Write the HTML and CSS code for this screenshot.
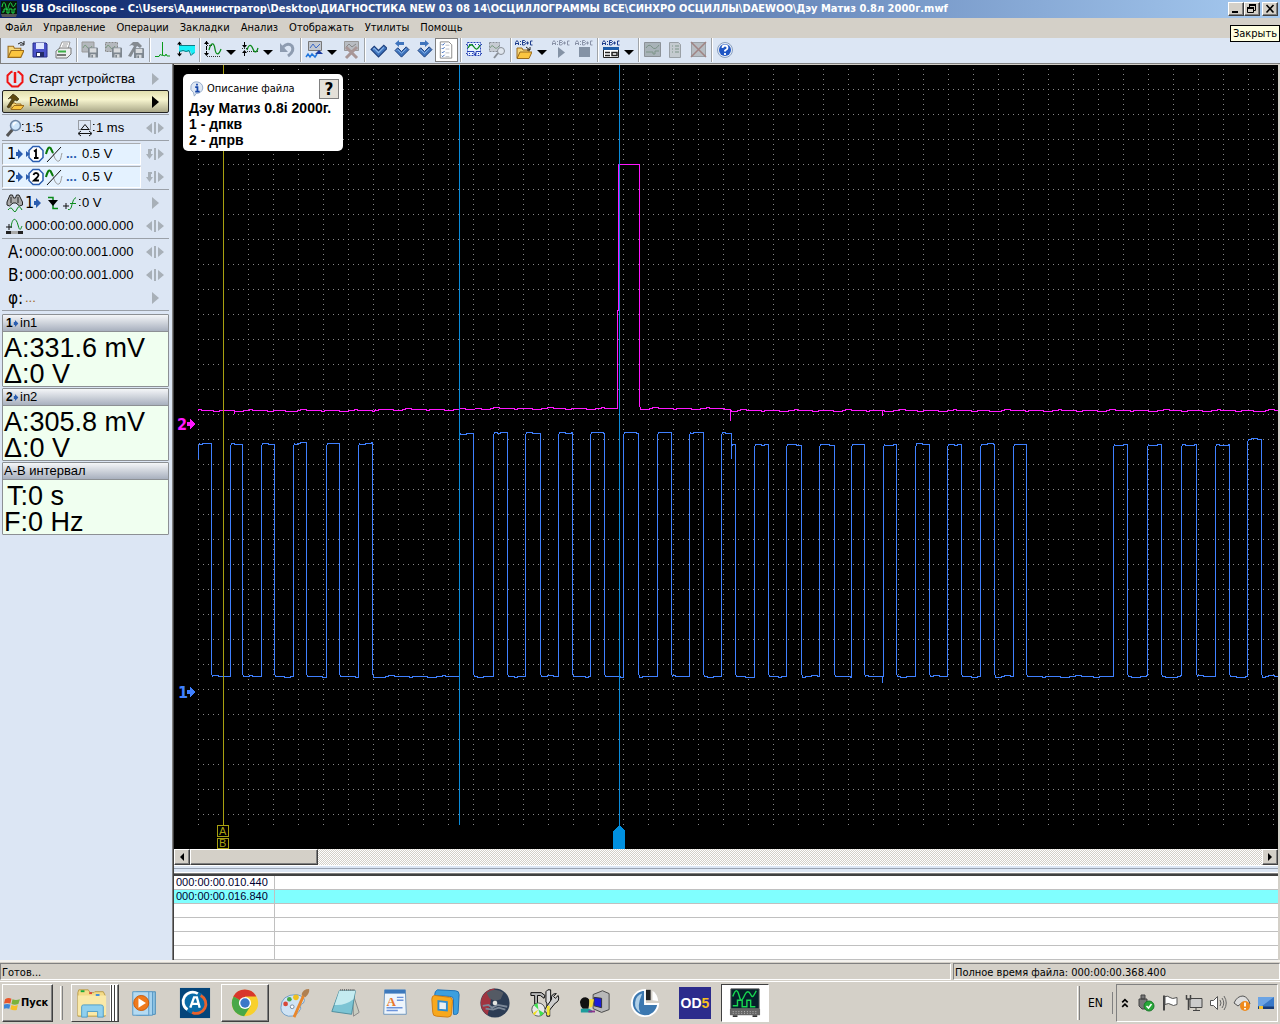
FILE: index.html
```html
<!DOCTYPE html>
<html lang="ru">
<head>
<meta charset="utf-8">
<title>USB Oscilloscope</title>
<link rel="stylesheet" href="styles.css">
</head>
<body>
<svg class="defs" aria-hidden="true">
  <symbol id="drop" viewBox="0 0 14 22"><path d="M2 11h10l-5 5z" fill="#000"/></symbol>
  <symbol id="floppy" viewBox="0 0 12 12"><path d="M0 0h11l1 1v11H0z"/><path d="M2 1h8v5H2zM3 8h6v4H3z" fill="#fff" fill-opacity=".7"/><path d="M4 9h2v3H4z"/></symbol>
  <symbol id="tick" viewBox="0 0 16 16"><path d="M1 7l3-3 4 4 5-5 3 3-8 8z" fill="#3f74bd" stroke="#1d3f7d"/><path d="M3 7l1-1 4 4 5-5" fill="none" stroke="#8db8ea"/></symbol>
  <symbol id="abc" viewBox="0 0 18 6"><path d="M.5 5V2.500L2 .5l1.500 2V5M.5 3.500h3M5.500 1v1M5.500 4v1M7.500 5V.5h2l1 1-1 1h-2 2l1 1-1 1.500h-2M11 3h3M12.500 1.500v3M17.500 1h-2v4h2" fill="none" stroke="currentColor"/></symbol>
  <symbol id="folder" viewBox="0 0 16 12"><path d="M1 11V1h5l1 2h6v2" fill="#f6d77b" stroke="#9a6b1c"/><path d="M1 11.500L4 5h12l-3 6.500z" fill="#fbc540" stroke="#9a6b1c"/></symbol>
  <symbol id="spin" viewBox="0 0 20 12"><path d="M1 6l6-5v10zM13 1l6 5-6 5zM9 0h2v12H9z" fill="#a8b0b8"/></symbol>
  <symbol id="flip" viewBox="0 0 20 12"><path d="M7 2H4v5M5 2v6" fill="none" stroke="#a8b0b8" stroke-width="2"/><path d="M1 6h7l-3.500 5z" fill="#a8b0b8"/><path d="M13 1l6 5-6 5zM9 0h2v12H9z" fill="#a8b0b8"/></symbol>
  <symbol id="next" viewBox="0 0 20 12"><path d="M7 0l7 6-7 6z" fill="currentColor"/></symbol>
  <symbol id="blue-arrow" viewBox="0 0 7 10"><path d="M0 3h2V0l5 5-5 5V7H0z" fill="#2a5db0"/></symbol>
  <symbol id="sine" viewBox="0 0 18 18"><path d="M1 9c2-7 3-7 4.500-6S8 8 9 11s3 6 5 5 2-5 3-8" fill="none" stroke="#999"/><path d="M1 9c2-7 3-7 4.500-6L8 8" fill="none" stroke="#0a7a0a" stroke-width="2"/><path d="M2 17L16 2" stroke="#111"/></symbol>
</svg>

<header class="titlebar">
  <svg class="app-icon" viewBox="0 0 16 16"><path d="M0 0h16v13H0z" fill="#0a1a0c"/><path d="M0 13h16l-1 3H1z" fill="#555"/><path d="M1 6c1-6 3-6 4 0s2 1 3-2 2-3 3 0 2 2 4-2M1 11h2V8h3v4h2V8h3v4h2V8h2" fill="none" stroke="#1fdc4b"/></svg>
  <h1>USB Oscilloscope - C:\Users\Администратор\Desktop\ДИАГНОСТИКА NEW 03 08 14\ОСЦИЛЛОГРАММЫ ВСЕ\СИНХРО ОСЦИЛЛЫ\DAEWOO\Дэу Матиз 0.8л 2000г.mwf</h1>
  <div class="winbuttons">
    <button class="raised" aria-label="Свернуть"><svg viewBox="0 0 12 10"><path d="M2 7h6v2H2z"/></svg></button>
    <button class="raised" aria-label="Восстановить"><svg viewBox="0 0 12 10"><path d="M3.500 0v3M3 1h7M9.500 1v5.500H8" fill="none" stroke="#000"/><path d="M3 0h7v2H3zM1 3h7v2H1z"/><path d="M1.500 4v4.500h6V4" fill="none" stroke="#000"/></svg></button>
    <button class="raised close" aria-label="Закрыть"><svg viewBox="0 0 12 10"><path d="M2.500 1l7 7.500M9.500 1l-7 7.500" stroke="#000" stroke-width="1.600"/></svg></button>
  </div>
  <div class="tooltip" role="tooltip">Закрыть</div>
</header>

<nav class="menu">
  <button>Файл</button><button>Управление</button><button>Операции</button><button>Закладки</button><button>Анализ</button><button>Отображать</button><button>Утилиты</button><button>Помощь</button>
</nav>

<div class="toolbar" role="toolbar">
  <button aria-label="Открыть"><svg viewBox="0 0 22 22"><use href="#folder" x="1" y="6" width="17" height="13"/><path d="M12 5q3-3 6 0M18 2v4h-4" fill="none" stroke="#222"/></svg></button>
  <button aria-label="Сохранить"><svg viewBox="0 0 22 22"><path d="M4 4h13l1 1v13H4z" fill="#4a52c8" stroke="#262c8a"/><path d="M7 4h8v6H7z" fill="#dfe6ff"/><path d="M7 13h8v5H7z" fill="#222a66"/><path d="M8 14h3v3H8z" fill="#fff"/></svg></button>
  <button aria-label="Печать"><svg viewBox="0 0 22 22"><path d="M7 10l3-7h8l-2 7z" fill="#fff" stroke="#999"/><path d="M4 12l4-3h11v6l-4 4H4z" fill="#eceeef" stroke="#777"/><path d="M5 15h9v2H5z" fill="#777"/><path d="M6 12.500h8" stroke="#3cae46" stroke-width="2"/><path d="M11 5h5M10 7h5" stroke="#999"/></svg></button>
  <i class="sep"></i>
  <button disabled aria-label="Сохранить сигнал"><svg viewBox="0 0 22 22"><path d="M3 3h12v10H3z" fill="#b4b8bd" stroke="#999"/><path d="M4 9q2-5 4-1t5-1" fill="none" stroke="#7b9b82"/><use href="#floppy" x="9" y="8" width="10" height="11" fill="#7e8790"/></svg></button>
  <button disabled aria-label="Сохранить фрагмент"><svg viewBox="0 0 22 22"><path d="M3.500 3.500h12v9h-12z" fill="#b4b8bd" stroke="#888" stroke-dasharray="2 1"/><path d="M4 9q2-5 4-1t5-1" fill="none" stroke="#7b9b82"/><use href="#floppy" x="10" y="8" width="10" height="11" fill="#7e8790"/></svg></button>
  <button disabled aria-label="Сохранить настройки"><svg viewBox="0 0 22 22"><path d="M4 7l4-4 5 0 4 4-2 2-3-2-6 11-3-1 6-10-2-1z" fill="#858b91"/><use href="#floppy" x="9" y="9" width="10" height="10" fill="#7e8790"/></svg></button>
  <i class="sep"></i>
  <button aria-label="Спектр"><svg viewBox="0 0 22 22"><path d="M3 17.500h4l1-2 2.500 1V3v13l2.500 1 1-2 1 2h3" fill="none" stroke="#0a9a1a"/></svg></button>
  <button aria-label="Маркеры"><svg viewBox="0 0 22 22"><path d="M4 6h16v3H4zM4 9h16v5l-3 2-2-4-3 1-3-1-5 1z" fill="#19f0f8"/><path d="M4 6.500h16M4 12.500l4-1 3 1 3-1 2 5 3-3" fill="none" stroke="#137a84"/><path d="M4.500 3v3M4.500 13v4" stroke="#000"/><path d="M2 5.500l2.500-3 2.500 3zM2 14.500l2.500 3 2.500-3z"/></svg></button>
  <i class="sep"></i>
  <button aria-label="Масштаб"><svg viewBox="0 0 22 22"><path d="M4.500 2v14" stroke="#000" stroke-dasharray="4 1"/><path d="M2 5l2.500-3L7 5zM2 14l2.500 3L7 14z"/><path d="M5 6.500h6M5 17.500h14" stroke="#333" stroke-dasharray="1 1"/><path d="M7 11c2-8 5-8 6-1s4 6 6 0" fill="none" stroke="#0a8a1a" stroke-width="1.300"/></svg></button>
  <button class="drop" aria-label="Масштаб: список"><svg viewBox="0 0 14 22"><use href="#drop"/></svg></button>
  <button aria-label="Сжатие"><svg viewBox="0 0 22 22"><path d="M5.500 3v5M5.500 12v5" stroke="#000"/><path d="M3 6h5l-2.500 3zM3 14h5l-2.500-3z"/><path d="M3 9.500h6M8 12.500h11" stroke="#333" stroke-dasharray="1 1"/><path d="M8 11c2-6 4-6 6-1s4 3 5-1" fill="none" stroke="#0a8a1a" stroke-width="1.300"/></svg></button>
  <button class="drop" aria-label="Сжатие: список"><svg viewBox="0 0 14 22"><use href="#drop"/></svg></button>
  <button disabled aria-label="Отменить"><svg viewBox="0 0 22 22"><path d="M7 8q5-5 9-1 3 5-4 10" fill="none" stroke="#8e9cb0" stroke-width="3"/><path d="M4 4v9h8z" fill="#8e9cb0"/></svg></button>
  <i class="sep"></i>
  <button aria-label="Наложение"><svg viewBox="0 0 22 22"><path d="M5.500 2.500h13v9h-13z" fill="#c2c8d0" stroke="#777"/><path d="M7 9l3-4 3 4 4-4" fill="none" stroke="#3a68c8"/><path d="M3 18l2-3 2 3 2-3 3 3 2-3" fill="none" stroke="#2277dd" stroke-width="1.500"/><path d="M12 15l4-4 4 4z" fill="#1d3da0"/></svg></button>
  <button class="drop" aria-label="Наложение: список"><svg viewBox="0 0 14 22"><use href="#drop"/></svg></button>
  <button disabled aria-label="Убрать наложение"><svg viewBox="0 0 22 22"><path d="M4.500 2.500h14v9h-14z" fill="#b8bcc2" stroke="#999"/><path d="M6 8l3-3 3 3 4-3" fill="none" stroke="#888"/><path d="M6 8l11 11M17 8L6 19" stroke="#a89696" stroke-width="3"/></svg></button>
  <i class="sep"></i>
  <button aria-label="Закладка"><svg viewBox="0 0 22 22"><use href="#tick" x="3" y="3" width="17" height="17"/></svg></button>
  <button aria-label="Предыдущая закладка"><svg viewBox="0 0 22 22"><use href="#tick" x="3" y="5" width="17" height="15"/><path d="M14 3H9V1L5 4.500 9 8V6h5z" fill="#3f74bd"/></svg></button>
  <button aria-label="Следующая закладка"><svg viewBox="0 0 22 22"><use href="#tick" x="3" y="5" width="17" height="15"/><path d="M7 3h5V1l4 3.500L12 8V6H7z" fill="#3f74bd"/></svg></button>
  <button class="pressed" aria-label="Список закладок" aria-pressed="true"><svg viewBox="0 0 22 22"><path d="M4.500 2.500h9l3 3v14h-12z" fill="#fff" stroke="#888"/><path d="M6 5l1 1 2-2M6 9l1 1 2-2M6 13l1 1 2-2M6 17l1 1 2-2" fill="none" stroke="#2f62b8"/><path d="M10 6h4M10 10h4M10 14h4M10 18h4" stroke="#b8bcc4"/></svg></button>
  <i class="sep"></i>
  <button aria-label="Выделение"><svg viewBox="0 0 22 22"><path d="M4.500 3.500h13v13h-13z" fill="#e8f2ff" stroke="#2742b5" stroke-dasharray="2 1"/><path d="M3 5.500h17M3 14.500h17" stroke="#2742b5" stroke-dasharray="1 2"/><path d="M5 9q3-6 6-1t6-2" fill="none" stroke="#078a18" stroke-width="1.300"/><path d="M5 12.500h6v3h2v-3h4" fill="none" stroke="#2742b5"/></svg></button>
  <button disabled aria-label="Увеличить выделение"><svg viewBox="0 0 22 22"><path d="M3.500 3.500h10v9h-10z" fill="#c6cbd2" stroke="#8a9098" stroke-dasharray="2 1"/><path d="M4 9q2-4 4-1t5-1" fill="none" stroke="#7b9b82"/><circle cx="15" cy="12" r="3.500" fill="#dfe6ee" stroke="#8a9098"/><path d="M12 14l-4 5" stroke="#8a9098" stroke-width="2"/></svg></button>
  <i class="sep"></i>
  <button class="abc" aria-label="Открыть сценарий"><svg viewBox="0 0 22 22"><use href="#abc" x="2" y="1" width="18" height="6"/><use href="#folder" x="3" y="8" width="16" height="12"/><path d="M13 8l4 3M17 8v3h-3" fill="none" stroke="#222"/></svg></button>
  <button class="drop" aria-label="Сценарий: список"><svg viewBox="0 0 14 22"><use href="#drop"/></svg></button>
  <button class="abc" disabled aria-label="Запустить"><svg viewBox="0 0 22 22"><use href="#abc" x="2" y="1" width="18" height="6"/><path d="M8 8l7 5.500L8 19z" fill="#8492a5"/></svg></button>
  <button class="abc" disabled aria-label="Остановить"><svg viewBox="0 0 22 22"><use href="#abc" x="2" y="1" width="18" height="6"/><path d="M6 8h11v10H6z" fill="#8492a5"/></svg></button>
  <i class="sep"></i>
  <button class="abc" aria-label="Окно сценария"><svg viewBox="0 0 22 22"><use href="#abc" x="2" y="1" width="18" height="6"/><path d="M3.500 8.500h15v10h-15z" fill="#fff" stroke="#222"/><path d="M3 8h16v3H3z" fill="#1c5ba8"/><path d="M5 13.500h5M5 16.500h5M12 13.500h5v3h-5z" fill="none" stroke="#222" stroke-width="1.500"/></svg></button>
  <button class="drop" aria-label="Окно: список"><svg viewBox="0 0 14 22"><use href="#drop"/></svg></button>
  <i class="sep"></i>
  <button disabled aria-label="Отчёт"><svg viewBox="0 0 22 22"><path d="M3.500 3.500h16v14h-16z" fill="#a8b2b8" stroke="#8c9298"/><path d="M5 9q3-5 6-1t7-2M5 13h7v2h2v-3h4" fill="none" stroke="#7c9488"/></svg></button>
  <button disabled aria-label="Список"><svg viewBox="0 0 22 22"><path d="M5.500 3.500h9l2 2v13h-11z" fill="#c4cacf" stroke="#9aa0a6"/><path d="M8 7h1M11 7h4M8 10h1M11 10h4M8 13h1M11 13h4" stroke="#7c9488"/></svg></button>
  <button disabled aria-label="Удалить"><svg viewBox="0 0 22 22"><path d="M4.500 3.500h14v14h-14z" fill="#b6bcc2" stroke="#9aa0a6"/><path d="M4 3l15 15M19 3L4 18" stroke="#a08484" stroke-width="1.500"/></svg></button>
  <i class="sep"></i>
  <button aria-label="Справка"><svg viewBox="0 0 22 22"><circle cx="11" cy="11" r="7.500" fill="#e4ebf6" stroke="#8aa0c0"/><circle cx="11" cy="11" r="6" fill="#1f56c4"/><path d="M8.500 9q0-2.500 2.500-2.500T13.500 9q0 1.200-2.500 2.500v1M11 14v2" fill="none" stroke="#fff" stroke-width="1.800"/></svg></button>
</div>

<main class="work">
  <aside class="side">
    <button class="row"><svg class="ic lead" viewBox="0 0 18 18"><path d="M6.500 1.500L5 2 1.500 5.500v6.500L6 16.500h6L16.500 12V5.500L13 2l-1.500-.5" fill="none" stroke="#f01414" stroke-width="2"/><path d="M9 2v11" stroke="#f01414" stroke-width="2.500"/></svg><span>Старт устройства</span><svg class="spin" viewBox="0 0 20 12"><use href="#next"/></svg></button>
    <button class="row modes"><svg class="ic lead" viewBox="0 0 18 18"><path d="M5 16V10h4l1 1h5v2" fill="#f6d77b" stroke="#9a6b1c"/><path d="M5 16.500l3-4h10l-3 4z" fill="#fbc540" stroke="#9a6b1c"/><path d="M2 6l5-5 3 2 3 3-2 2-2-1-6 8-2-1 5-8-2-1z" fill="#5f4b12" stroke="#2b2208" stroke-width=".6"/></svg><span>Режимы</span><svg class="spin" viewBox="0 0 20 12"><use href="#next"/></svg></button>
    <hr>
    <div class="row"><svg class="ic" viewBox="0 0 18 18"><path d="M7 10l-6 7" stroke="#555" stroke-width="3"/><circle cx="9.500" cy="6.500" r="5" fill="#cfe6fb" stroke="#6f87a5" stroke-width="1.500"/><path d="M7.500 6.500q0-3 3-3" fill="none" stroke="#fff" stroke-width="1.500"/><path d="M16 5.500h1.500M16 11.500h1.500" stroke="#111"/></svg><span class="zoomv">1:5</span><svg class="ic" viewBox="0 0 18 18"><path d="M1.500 1.500h12v9h-12z" fill="none" stroke="#555" stroke-dasharray="1 1"/><path d="M4 10.500h8l-4-5z" fill="none" stroke="#111"/><path d="M2 14.500h12M4 12l-3 2.500L4 17M12 12l3 2.500-3 2.500" fill="none" stroke="#111"/><path d="M16 5.500h1.500M16 11.500h1.500" stroke="#111"/></svg><span>1 ms</span><svg class="spin" viewBox="0 0 20 12"><use href="#spin"/></svg></div>
    <hr>
    <div class="row chan"><div class="cell"><b>1</b><svg class="ar" viewBox="0 0 7 10"><use href="#blue-arrow"/></svg><svg class="ic" viewBox="0 0 18 18"><path d="M7 1.500h6l4 4v7l-4 4H7l-4-4v-7z" fill="#fff" stroke="#2a5db0" stroke-width="1.500"/><path d="M0 6l4 3-4 3z" fill="#2a5db0"/><path d="M8 6.500l2-1.500v8M8 13h4.500" fill="none" stroke="#000" stroke-width="1.800"/></svg><svg class="ic" viewBox="0 0 18 18"><use href="#sine"/></svg><span class="dots">...</span><span>0.5 V</span></div><svg class="spin" viewBox="0 0 20 12"><use href="#flip"/></svg></div>
    <div class="row chan"><div class="cell"><b>2</b><svg class="ar" viewBox="0 0 7 10"><use href="#blue-arrow"/></svg><svg class="ic" viewBox="0 0 18 18"><path d="M7 1.500h6l4 4v7l-4 4H7l-4-4v-7z" fill="#fff" stroke="#2a5db0" stroke-width="1.500"/><path d="M0 6l4 3-4 3z" fill="#2a5db0"/><path d="M7.500 7q.5-2 2.500-2t2.500 2q0 1.500-4.500 5.500H13" fill="none" stroke="#000" stroke-width="1.800"/></svg><svg class="ic" viewBox="0 0 18 18"><use href="#sine"/></svg><span class="dots">...</span><span>0.5 V</span></div><svg class="spin" viewBox="0 0 20 12"><use href="#flip"/></svg></div>
    <hr>
    <div class="row trig"><svg class="ic" viewBox="0 0 18 18"><path d="M4 1h2.500l1 3h2l1-3H13l3.500 7v3l-3 1-3.500-3h-3l-3.500 3-2.500-1V8z" fill="#aaa" stroke="#222"/><path d="M5 3v6M12 3v6" stroke="#222"/><path d="M2 16q3-4 5 0t4-1 5 1" fill="none" stroke="#0a8a1a"/></svg><b>1</b><svg class="ar" viewBox="0 0 7 10"><use href="#blue-arrow"/></svg><svg class="ic edge" viewBox="0 0 18 18"><path d="M4 3.500h5v11h5" fill="none" stroke="#0a8a1a" stroke-width="1.500"/><path d="M4 6h10l-5 6z" fill="#000"/></svg><svg class="ic" viewBox="0 0 18 18"><path d="M0 12h6M3 9v6" fill="none" stroke="#111"/><path d="M5 15.500q3 1 4-5t4-7M7 9.500h6" fill="none" stroke="#0a8a1a"/><path d="M16 5.500h1.500M16 11.500h1.500" stroke="#111"/></svg><span>0 V</span><svg class="spin" viewBox="0 0 20 12"><use href="#next"/></svg></div>
    <div class="row"><svg class="ic" viewBox="0 0 18 18"><path d="M5 11c1-11 5-11 7-3s3 3 4 1" fill="none" stroke="#0a8a1a"/><path d="M0 10h6M3 7v6" stroke="#111"/><path d="M0 15.500h5M12 15.500h5" stroke="#222" stroke-width="3"/><path d="M5 15.500h7" stroke="#aaa" stroke-width="3"/></svg><span>000:00:00.000.000</span><svg class="spin" viewBox="0 0 20 12"><use href="#spin"/></svg></div>
    <hr>
    <div class="row"><span class="letter">A:</span><span>000:00:00.001.000</span><svg class="spin" viewBox="0 0 20 12"><use href="#spin"/></svg></div>
    <div class="row"><span class="letter">B:</span><span>000:00:00.001.000</span><svg class="spin" viewBox="0 0 20 12"><use href="#spin"/></svg></div>
    <div class="row"><span class="letter">φ:</span><span class="none">...</span><svg class="spin" viewBox="0 0 20 12"><use href="#next"/></svg></div>
    <hr>
    <section class="meter"><h2><b>1</b><svg viewBox="0 0 7 10"><use href="#blue-arrow"/></svg>in1</h2><p>A:331.6 mV</p><p>Δ:0 V</p></section>
    <section class="meter"><h2><b>2</b><svg viewBox="0 0 7 10"><use href="#blue-arrow"/></svg>in2</h2><p>A:305.8 mV</p><p>Δ:0 V</p></section>
    <section class="meter interval"><h2>A-B интервал</h2><p class="period">T:0 s</p><p>F:0 Hz</p></section>
  </aside>

  <div class="right">
    <div class="scope">
      <svg class="plot" aria-label="Осциллограмма">
        <defs><pattern id="grid" x="24" y="-1" width="25" height="25" patternUnits="userSpaceOnUse"><path d="M0 0h1v1H0zM5 0h1v1H5zM10 0h1v1h-1zM15 0h1v1h-1zM20 0h1v1h-1zM0 5h1v1H0zM0 10h1v1H0zM0 15h1v1H0zM0 20h1v1H0z" fill="#888"/></pattern></defs>
        <rect x="24" y="1" width="100%" height="759" fill="url(#grid)"/>
        <path id="ch1" class="trace ch1"/>
        <path id="ch2" class="trace ch2"/>
        <path d="M49 0h1v760h-1z" fill="#a8a010"/>
        <path d="M285 0h1v760h-1zM445 0h1v760h-1z" fill="#0a8ad8"/>
        <path d="M439 784v-18l6-6 6 6v18z" fill="#0090e0"/>
        <path d="M43.500 760.500h11v11h-11zM43.500 773.500h11v10h-11z" fill="none" stroke="#a8a010"/>
        <text x="45" y="770" class="cur">A</text><text x="45" y="782" class="cur">B</text>
        <text x="3" y="365" class="mark m2">2</text><path d="M13 357h3v-3l6 5-6 5v-3h-3z" fill="#ff18ff"/>
        <text x="4" y="633" class="mark m1">1</text><path d="M13 625h3v-3l6 5-6 5v-3h-3z" fill="#3f80ff"/>
      </svg>
      <div class="note">
        <div class="note-head"><svg viewBox="0 0 18 18"><path d="M9 1a7 6.500 0 1 1-1 13l-2 3-1-4A6.500 6.500 0 0 1 9 1z" fill="#dfe8f4" stroke="#8ea6c6"/><path d="M9 3v2M7 7h2.500v5M7 12h5" fill="none" stroke="#1646a8" stroke-width="2"/></svg><span>Описание файла</span><button aria-label="Справка">?</button></div>
        <p>Дэу Матиз 0.8i 2000г.</p><p>1 - дпкв</p><p>2 - дпрв</p>
      </div>
    </div>
    <div class="hscroll"><button class="raised" aria-label="Влево"><svg viewBox="0 0 8 8"><path d="M6 0v8L2 4z"/></svg></button><div class="thumb raised"></div><button class="raised end" aria-label="Вправо"><svg viewBox="0 0 8 8"><path d="M2 0v8l4-4z"/></svg></button></div>
    <div class="splitter"></div>
    <table class="marks">
      <tbody>
        <tr><td>000:00:00.010.440</td><td></td></tr>
        <tr class="sel"><td>000:00:00.016.840</td><td></td></tr>
        <tr><td></td><td></td></tr><tr><td></td><td></td></tr><tr><td></td><td></td></tr><tr><td></td><td></td></tr>
      </tbody>
    </table>
  </div>
</main>

<div class="status"><div>Готов...</div><div>Полное время файла: 000:00:00.368.400</div></div>

<footer class="taskbar">
  <button class="raised start"><svg viewBox="0 0 16 16"><path d="M1 4q3-2 6-.5L6 8Q3 7 0 8z" fill="#e8562c"/><path d="M8 4q3 1.500 7 0l-1.500 4.500Q10 10 7 8.500z" fill="#79b33c"/><path d="M0 9q3-1 6 0l-1 4q-3-1-5 0z" fill="#3d86d8"/><path d="M7 9.500q3 1.500 6 0L12 14q-3 1-6-.5z" fill="#f5c028"/></svg>Пуск</button>
  <i class="grip"></i>
  <div class="tasks">
    <button class="raised stack" aria-label="Проводник"><svg viewBox="0 0 34 34"><path d="M2 6l1-3h10l2 3h4l1-1h9l2 4v22H2z" fill="#f4dc88" stroke="#b99a45"/><path d="M2 9h30v21H2z" fill="#fae9a8"/><path d="M5 4.500h4" stroke="#18a838" stroke-width="2"/><path d="M14 6.500h3" stroke="#e04838" stroke-width="2"/><path d="M21 8.500h4" stroke="#3c8ce0" stroke-width="2"/><path d="M6 32V21q0-2 2-2h18q3 0 3 2v11h-6v-6H12v6z" fill="#8fd0ee" stroke="#4c9cc8"/></svg></button>
    <button aria-label="Media Player"><svg viewBox="0 0 34 34"><path d="M11 6l17-1v24l-17 1z" fill="#8fc4e4" stroke="#4a8cb8"/><path d="M8 5h17v25H8z" fill="#a6d2ee" stroke="#5898c4"/><path d="M4 5h17v25H4z" fill="#b4daf2" stroke="#5898c4"/><circle cx="13" cy="17" r="8" fill="#f07a1c" stroke="#c85a0c"/><path d="M10 12l8 5-8 5z" fill="#fff"/></svg></button>
    <button aria-label="Сканер"><svg viewBox="0 0 34 34"><path d="M1 1h32v32H1z" fill="#04457a"/><circle cx="17" cy="17" r="12" fill="#0a6ba8"/><path d="M9 24A10 10 0 0 1 20 7" fill="none" stroke="#fff" stroke-width="3"/><path d="M23 9a10 10 0 0 1-9 18" fill="none" stroke="#e8622c" stroke-width="3"/><path d="M12 22l4-11h3l3 11M13 18h8" fill="none" stroke="#fff" stroke-width="2.500"/></svg></button>
    <button class="raised" aria-label="Chrome"><svg viewBox="0 0 34 34"><circle cx="17" cy="17" r="14" fill="#f8d02c"/><path d="M17 17L4.500 10A14 14 0 0 1 29 10H17z" fill="#d8372c"/><path d="M4.900 10A14 14 0 0 0 16 31l7-11-6-3z" fill="#48a848"/><circle cx="17" cy="17" r="6.500" fill="#fff"/><circle cx="17" cy="17" r="5" fill="#3c78c8"/></svg></button>
    <button aria-label="Paint"><svg viewBox="0 0 34 34"><path d="M2 22q0-14 17-14 11 3 7 9-4 1-3 6-4 9-13 8-8-2-8-9z" fill="#cfe3f4" stroke="#6f9cc4"/><circle cx="7" cy="18" r="2.500" fill="#d84838"/><circle cx="11" cy="13" r="2.500" fill="#48a848"/><circle cx="18" cy="11" r="3" fill="#f0c020"/><circle cx="14" cy="21" r="2" fill="#fff" stroke="#789"/><path d="M27 7L16 32" stroke="#e8872c" stroke-width="3"/><path d="M24 8q1-6 8-6 1 4-4 9z" fill="#b08050"/></svg></button>
    <button aria-label="Блокнот"><svg viewBox="0 0 34 34"><path d="M25 6l7 21-6 4z" fill="#c8ccc0" stroke="#888"/><path d="M11 4h17l-4 25-21-3z" fill="#7cc4d4" stroke="#4c8c9c"/><path d="M11 4h17l-2 9q-9 7-20 6z" fill="#c4ebf0"/><path d="M12 3h16" stroke="#666" stroke-width="2" stroke-dasharray="1 1"/></svg></button>
    <button aria-label="WordPad"><svg viewBox="0 0 34 34"><path d="M6 3h22l1 26H5z" fill="#eef5fc" stroke="#6c94bc"/><path d="M6 3h22v4H6z" fill="#3c78bc"/><path d="M19 11h7M19 14h7M8 22h17M8 25h12" stroke="#6c94dc" stroke-width="1.500"/><text x="8" y="20" class="wp">A</text></svg></button>
    <button aria-label="VMware"><svg viewBox="0 0 34 34"><path d="M9 3l19 1q4 0 4 4l-1 18q0 4-5 3V13q0-3-4-3L6 9q0-5 3-6z" fill="#3c9fdf" stroke="#1c6fb4"/><path d="M6 9l16 2q3 0 3 4l-1 13q0 4-4 4L8 31q-4 0-4-4L3 13q0-4 3-4z" fill="#f8a81c" stroke="#d07c10"/><path d="M10 15l9 1v9l-9-1z" fill="#e8eef0" stroke="#2c8cd0" stroke-width="2"/></svg></button>
    <button aria-label="Диск"><svg viewBox="0 0 34 34"><circle cx="17" cy="17" r="15.500" fill="#2c3c54"/><path d="M17 1.500A15.500 15.500 0 0 0 9 30l3-12 1-10z" fill="#a03440"/><path d="M8 6q9-6 18 0l-3 7-6 2-6-3z" fill="#545a64"/><path d="M4 20l6-1 4 3 6-3 10 2M7 23l8 1 6-2 7 2" fill="none" stroke="#7c8898" stroke-width="2"/><circle cx="17" cy="17" r="2.500" fill="#e4e4e0"/></svg></button>
    <button aria-label="Настройка"><svg viewBox="0 0 34 34"><path d="M2 6h11l4 3-1 3-4-3H9v9H6V9H2z" fill="#bbb" stroke="#000"/><path d="M20 3h3v13l-1 1v14h-3V17l-1-1V5z" fill="#ddd" stroke="#000"/><path d="M31 9l-3 3-2-2 3-3q-6 0-5 6l-8 12 3 3 9-11q5-2 3-8z" fill="#ccc" stroke="#000"/><circle cx="10" cy="24" r="7" fill="#e8e8e8" stroke="#555"/><path d="M10 24l-5-5 4-2zM10 24l6 4-4 3z" fill="#40e050"/><path d="M10 24l-6 4 2 2z" fill="#f0e020"/><path d="M19 20h3v10h-3z" fill="#f4e430"/></svg></button>
    <button aria-label="Терминал"><svg viewBox="0 0 34 34"><path d="M15 8l10-4 7 3v17l-8 3-9-4z" fill="#b8b8b8" stroke="#444"/><path d="M16 11l8 1v10l-8-2z" fill="#1c1cd8" stroke="#333"/><path d="M1 16q1-5 6-5 5 1 4 6l-1 6H4q-3-3-3-7z" fill="#111"/><path d="M2 23h9l3 2v2H2z" fill="#1c9c9c"/><path d="M11 13h5l-2 8-3 1z" fill="#f4dc38"/><path d="M10 25h7v2h-7z" fill="#88338c"/></svg></button>
    <button aria-label="Acronis"><svg viewBox="0 0 34 34"><path d="M17 3A14 14 0 1 0 31 18H17z" fill="#3c78b0" stroke="#fff" stroke-width="2"/><path d="M14 7a11 11 0 0 0-2 20q-4-6 2-20z" fill="#b0d0e8"/><path d="M18 3h5v11h-5z" fill="#222"/><path d="M25 4q5 3 6 11l-6-1z" fill="#fff"/></svg></button>
    <button aria-label="OD5"><span class="od">OD<b>5</b></span></button>
    <button class="pressed" aria-label="USB Oscilloscope"><svg viewBox="0 0 34 34"><path d="M2 2h30v21H2z" fill="#05202a" stroke="#555"/><path d="M1 23h32v7H1z" fill="#666"/><path d="M4 30h5v2H4zM25 30h5v2h-5z" fill="#333"/><path d="M4 10c3-8 5-8 7 0s4 2 6-2 4-4 6 0 3 2 6-4M4 20h5v-6h5v7h5v-7h4v7h5" fill="none" stroke="#18d850" stroke-width="1.500"/><path d="M4 26h26M4 28h26" stroke="#bbb" stroke-dasharray="1 2"/></svg></button>
  </div>
  <i class="grip"></i>
  <span class="lang">EN</span>
  <i class="line"></i>
  <div class="tray">
    <svg class="chev" viewBox="0 0 10 10"><path d="M2 4l2.500-2.500L7 4M2 8l2.500-2.500L7 8" fill="none" stroke="#000" stroke-width="1.500"/></svg>
    <svg viewBox="0 0 18 18"><path d="M4 1h4v4H4zM2 5h8v7l-2 3H5l-3-3z" fill="#777" stroke="#444"/><circle cx="12" cy="12" r="5" fill="#28a838" stroke="#18782a"/><path d="M9.500 12l2 2 3-4" fill="none" stroke="#fff" stroke-width="1.500"/></svg>
    <svg viewBox="0 0 18 18"><path d="M3 1.500v15" stroke="#444" stroke-width="2"/><path d="M4 2.500q3-1 5 1t7 0v7q-4 2-6 0t-6 0z" fill="#fff" stroke="#555"/></svg>
    <svg viewBox="0 0 18 18"><path d="M5 4.500h12v9H5z" fill="#ccc" stroke="#444"/><path d="M8 16.500h7M11 14v2" stroke="#444"/><path d="M1.500 1v4h4V1M3.500 5v11" fill="none" stroke="#444" stroke-width="1.500"/></svg>
    <svg viewBox="0 0 18 18"><path d="M1.500 6.500h3l4-4v13l-4-4h-3z" fill="#fff" stroke="#555"/><path d="M11 6q2 3 0 6M13 4q3.500 5 0 10M15 2q4.500 7 0 14" fill="none" stroke="#666"/></svg>
    <svg viewBox="0 0 18 18"><path d="M1 9q3-7 9-7 5 1 7 8l-4 1-3-3-5 4z" fill="#ddd" stroke="#555"/><circle cx="12" cy="12" r="5" fill="#f08a1c"/><path d="M12 8.500v4M12 14v1.500" stroke="#fff" stroke-width="1.800"/></svg>
    <svg viewBox="0 0 18 18"><path d="M1 3h16v11H1z" fill="#3878c8"/><path d="M1 3h16L5 12H1z" fill="#6ca4e4"/><path d="M1 12.500h16V15H1z" fill="#173a74"/><path d="M2 12h4v3H2z" fill="#f0c030"/></svg>
  </div>
</footer>
<script src="traces.js"></script>
</body>
</html>
```
FILE: traces.js
```js
// Channel 1: crankshaft sensor pulses as [rise x, fall x, top y].
const BASE = 611;
const pulses = [
  [24, 37, 378], [56, 68, 378], [87, 100, 378], [119, 132, 378], [152, 165, 378], [184, 198, 378],
  [285, 299, 368], [319, 333, 367], [351, 366, 367], [384, 398, 367], [416, 430, 367],
  [449, 464, 367], [483, 497, 367], [515, 529, 367], [547, 557, 367], [557, 561, 379],
  [580, 594, 379], [612, 627, 379], [645, 660, 379], [677, 690, 379], [709, 722, 379],
  [741, 755, 379], [773, 787, 379], [806, 820, 379], [839, 852, 379],
  [939, 953, 379], [973, 987, 379], [1007, 1022, 379], [1041, 1055, 379], [1073, 1087, 374]
];

// One-pixel ripple of the digitised signal.
const ripple = x => [0, 0, 1, 0, 0, 0, -1, 0, 1, 1, 0][(x * 7 + (x >> 3)) % 11];

// Stepped run at height y, so that the line stays one pixel thick.
function level(from, to, y) {
  let d = `L${from} ${y}`;
  for (let x = from; x < to; x += 3) d += `V${y + ripple(x)}H${Math.min(x + 3, to)}`;
  return d;
}

let d1 = "M24 393";
pulses.forEach(([rise, fall, top], i) => {
  const next = pulses[i + 1];
  d1 += `L${rise} ${top + 3}` + level(rise + 1, fall, top);
  if (next && next[0] - fall < 2) {
    d1 += `L${fall} 393`;
    return;
  }
  const end = next ? next[0] : 1103;
  d1 += `L${fall} ${BASE - 3}` + level(fall + 1, end, BASE);
});
d1 += "M708 611V617";
document.getElementById("ch1").setAttribute("d", d1);

// Channel 2: camshaft sensor.
const d2 = "M24 345" + level(24, 200, 345) + level(201, 300, 344) + level(301, 443, 343) +
  "L443 245L444 245L444 99L465 99L465 340" + level(466, 556, 343) +
  "L556 355L556 345" + level(557, 1104, 345) + "M60 345V348M708 345V350";
document.getElementById("ch2").setAttribute("d", d2);
```
FILE: styles.css
```css
* { box-sizing: border-box; }
body {
  margin: 0;
  min-height: 100vh;
  display: flex;
  flex-direction: column;
  background: #d4d0c8;
  color: #000;
  font: 11px/14px "DejaVu Sans Condensed", "DejaVu Sans", sans-serif;
  overflow-x: hidden;
}
h1, h2, p { margin: 0; font-size: inherit; font-weight: normal; }
button { margin: 0; padding: 0; border: 0; background: none; color: inherit; font: inherit; }
svg { display: block; }
.defs { position: absolute; width: 0; height: 0; }
.raised {
  background: #d4d0c8;
  border: 1px solid;
  border-color: #fff #404040 #404040 #fff;
  box-shadow: inset -1px -1px #808080;
}

.titlebar {
  position: relative;
  display: flex;
  align-items: center;
  height: 18px;
  padding: 0 2px 0 1px;
  background: linear-gradient(90deg, #0a246a, #a6caf0);
  color: #fff;
}
.app-icon { width: 16px; height: 16px; margin-right: 4px; }
.titlebar h1 { flex: 1; min-width: 0; overflow: hidden; white-space: nowrap; font-weight: bold; }
.winbuttons { display: flex; }
.winbuttons button { width: 16px; height: 14px; }
.winbuttons .close { margin-left: 2px; }
.winbuttons svg { width: 12px; height: 10px; margin-left: 1px; }
.tooltip {
  position: absolute;
  right: 0;
  top: 25px;
  z-index: 2;
  height: 17px;
  padding: 1px 2px;
  border: 1px solid #000;
  background: #ffffe1;
  color: #000;
}

.menu { display: flex; height: 20px; padding-left: 5px; gap: 11px; }

.toolbar {
  display: flex;
  align-items: flex-start;
  height: 26px;
  padding-left: 4px;
  background: #dce6f4;
  border-left: 1px solid #808080;
  border-bottom: 1px solid #808080;
}
.toolbar button { width: 23px; height: 24px; display: grid; place-items: center; }
.toolbar button svg { width: 22px; height: 22px; }
.toolbar .drop { width: 14px; }
.toolbar .drop svg { width: 14px; }
.toolbar .pressed { background: #fff; border: 1px solid #808080; }
.toolbar .pressed svg { width: 21px; }
.toolbar .abc { color: #1c3c8c; }
.toolbar .abc:disabled { color: #8a93a8; }
.toolbar .sep { width: 4px; height: 24px; border-right: 1px solid #fff; box-shadow: inset -1px 0 #a0a4a8; }

.work { flex: 1; display: flex; min-height: 0; }
.side {
  width: 173px;
  padding: 3px 3px 3px 2px;
  background: #dce6f4;
  border-right: 1px solid #808080;
  font: 14px/16px "Liberation Sans", Arial, sans-serif;
}
.side hr { height: 1px; margin: 1px 0; border: 0; background: #9aa0a8; }
.row { display: flex; align-items: center; width: 100%; height: 23px; padding-left: 4px; font-size: 13px; white-space: nowrap; text-align: left; }
.row .ic { width: 18px; height: 18px; margin-right: 1px; flex: none; }
.row .lead { margin-right: 5px; }
.row .ar { width: 7px; height: 10px; margin-right: 3px; }
.row b { width: 9px; font: 16px/18px "DejaVu Sans Condensed", sans-serif; }
.row .spin { width: 20px; height: 12px; margin-left: auto; margin-right: 4px; color: #a8b0b8; flex: none; }
.modes { padding-left: 3px; border: 1px solid #222; border-radius: 2px; background: linear-gradient(#e2dfae, #f8f6d0 40%, #aaa888); }
.modes .spin { margin-right: 3px; color: #000; }
.zoomv { width: 52px; }
.letter { width: 19px; padding-left: 2px; font: 17px/20px "DejaVu Sans Condensed", sans-serif; }
.none { color: #a06820; }
.chan { padding-left: 0; }
.cell { display: flex; align-items: center; width: 139px; height: 22px; padding-left: 4px; background: #e4f2ff; border: 1px solid #a8acb0; border-color: #a8acb0 #fff #fff #a8acb0; }
.dots { width: 18px; padding-left: 2px; color: #2a5db0; font-weight: bold; }
.edge { margin-left: 2px; }
.trig .ar { margin-right: 1px; }

.meter { height: 73px; margin-bottom: 1px; border: 1px solid #8c9094; border-radius: 1px; background: #f0fff0; }
.side hr + .meter { margin-top: 3px; }
.meter h2 { display: flex; align-items: center; height: 17px; padding-left: 1px; border-bottom: 1px solid #8c9094; background: linear-gradient(#f4f6f8, #a8b0be); font-size: 13px; }
.meter h2 b { width: 8px; padding-left: 2px; font-size: 12px; }
.meter h2 svg { width: 6px; height: 7px; margin: 0 1px; }
.meter p { padding-left: 1px; font-size: 27px; line-height: 26px; white-space: nowrap; }
.meter h2 + p { padding-top: 3px; }
.meter .period { padding-left: 4px; }

.right { flex: 1; min-width: 0; display: flex; flex-direction: column; padding-right: 2px; border-left: 1px solid #404040; }
.scope { position: relative; flex: 1; min-height: 400px; margin-top: 1px; background: #000; overflow: hidden; }
.plot { position: absolute; width: 100%; height: 100%; shape-rendering: crispEdges; }
.trace { fill: none; stroke-width: 1; transform: translate(.5px, .5px); }
.ch1 { stroke: #3f80ff; }
.ch2 { stroke: #ff18ff; }
.cur { fill: #a8a010; font: 11px "Liberation Sans", sans-serif; }
.mark { font: bold 16px "DejaVu Sans Condensed", sans-serif; }
.m1 { fill: #3f80ff; }
.m2 { fill: #ff18ff; }
.note { position: absolute; left: 9px; top: 9px; width: 160px; height: 77px; padding: 4px 4px 0 6px; border-radius: 5px; background: #fff; }
.note-head { display: flex; align-items: center; height: 22px; }
.note-head svg { width: 16px; height: 16px; margin-right: 2px; }
.note-head span { flex: 1; white-space: nowrap; }
.note-head button { width: 20px; height: 20px; border: 1px solid #808080; background: #e4e0d8; font: bold 17px/18px "DejaVu Sans Condensed", sans-serif; }
.note p { font: bold 14px/16px "Liberation Sans", Arial, sans-serif; white-space: nowrap; }

.hscroll { display: flex; height: 16px; background: repeating-conic-gradient(#fff 0 25%, #d4d0c8 0 50%) 0 0 / 2px 2px; }
.hscroll button { width: 16px; height: 16px; display: grid; place-items: center; }
.hscroll svg { width: 8px; height: 8px; }
.thumb { width: 128px; height: 16px; }
.hscroll .end { margin-left: auto; }
.splitter { height: 9px; border-top: 1px solid #fff; border-bottom: 1px solid #808080; background: linear-gradient(#dce6f4 2px, #9aa4b4 2px 3px, #dce6f4 3px 6px, #fff 6px); }
.marks { width: 100%; border-collapse: collapse; table-layout: fixed; border-top: 2px solid #404040; background: #fff; color: #000030; font: 11px/13px "Liberation Sans", Arial, sans-serif; }
.marks td { height: 14px; padding: 0 2px; border-bottom: 1px solid #c0c0c0; white-space: nowrap; }
.marks td:first-child { width: 100px; border-right: 1px solid #c0c0c0; }
.marks .sel { background: #80ffff; }

.status { display: flex; height: 21px; gap: 2px; padding: 1px 0; border-top: 2px solid #f4f2ee; }
.status div { flex: 1; padding: 1px; border: 1px solid; border-color: #808080 #fff #fff #808080; line-height: 15px; }
.status div + div { flex: 0 0 327px; }

.taskbar { display: flex; align-items: center; height: 43px; padding: 0 2px; border-top: 1px solid #fff; }
.start { display: flex; align-items: center; width: 51px; height: 38px; padding-left: 1px; font-weight: bold; }
.start svg { width: 17px; height: 17px; }
.grip { width: 3px; height: 34px; border-left: 1px solid #fff; border-right: 1px solid #808080; }
.start + .grip { margin: 0 8px 0 7px; }
.tasks { flex: 1; display: flex; gap: 2px; }
.tasks button { width: 48px; height: 38px; display: grid; place-items: center; }
.tasks svg { width: 32px; height: 32px; }
.tasks .stack { box-shadow: inset -1px 0 #808080, inset -3px 0 #fff, inset -4px 0 #404040, inset -6px 0 #fff, inset -7px 0 #404040, inset -8px 0 #fff; padding-right: 7px; }
.tasks .pressed { background: #fff; border: 1px solid; border-color: #404040 #fff #fff #404040; }
.wp { fill: #e8782c; font: bold 14px "Liberation Serif", serif; }
.od { width: 32px; height: 32px; background: #2c2c8c; color: #fff; font: bold 14px/32px "Liberation Sans", sans-serif; text-align: center; }
.od b { color: #f8c020; }
.lang { width: 32px; padding-left: 8px; font-size: 12px; }
.line { width: 1px; height: 22px; background: #808080; }
.tray { display: flex; align-items: center; gap: 6px; width: 162px; height: 38px; margin-left: 3px; padding-left: 3px; border: 1px solid; border-color: #808080 #fff #fff #808080; }
.tray svg { width: 18px; height: 18px; flex: none; }
.tray .chev { width: 11px; height: 11px; }
```
